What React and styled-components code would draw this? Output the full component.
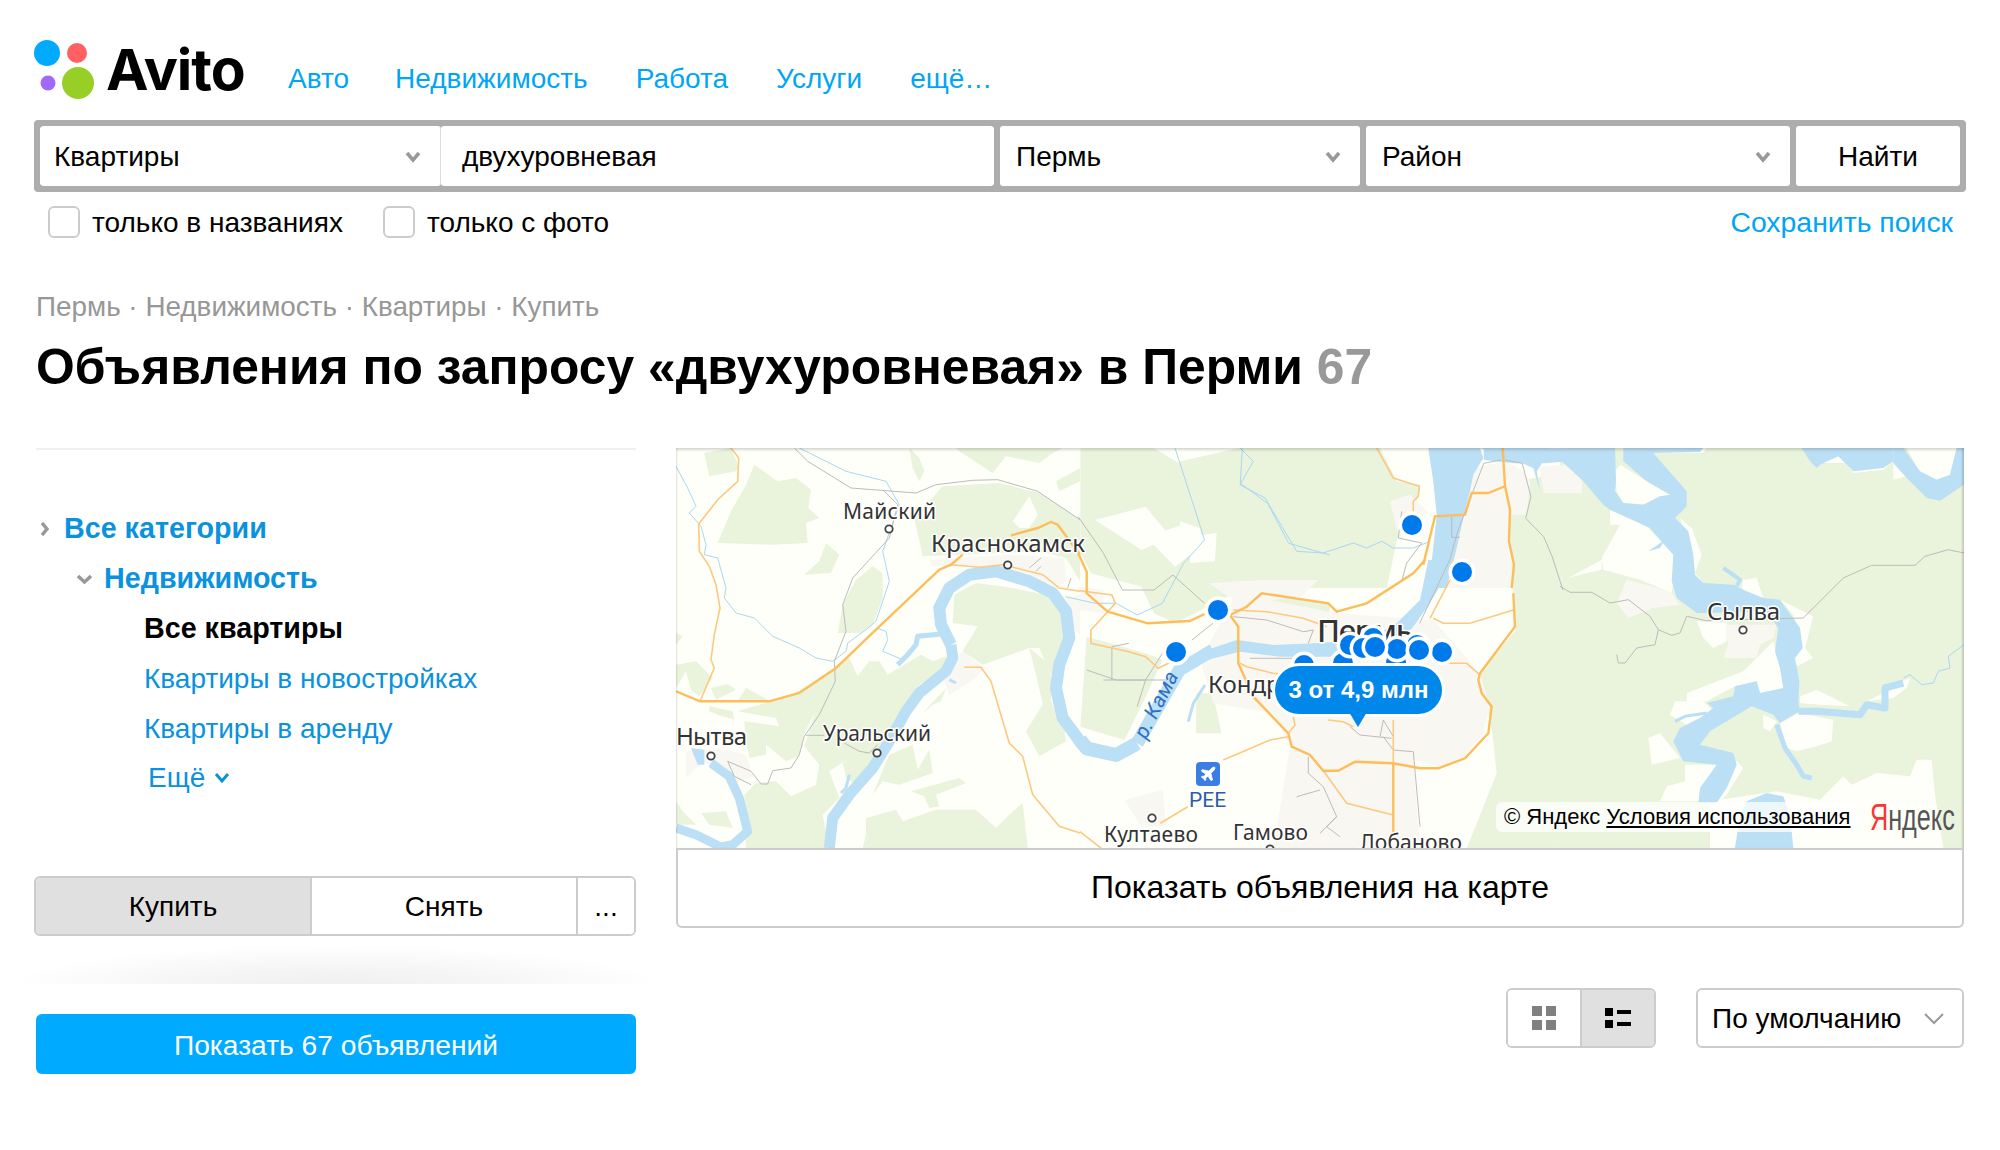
import React from "react";
import styled, { createGlobalStyle } from "styled-components";
import { Plane } from "lucide-react";

const GlobalStyle = createGlobalStyle`
  * { box-sizing: border-box; }
  body {
    margin: 0;
    background: #fff;
    color: #000;
    font-family: "Liberation Sans", Arial, sans-serif;
    font-size: 28px;
  }
`;

// map geometry is traced in the coordinates of reference crops
const frame = (ox, oy, sx, sy) => (...n) => {
  const out = [];
  for (let i = 0; i < n.length; i += 2) {
    out.push(`${(ox + n[i] / sx).toFixed(1)},${(oy + n[i + 1] / sy).toFixed(1)}`);
  }
  return out.join(" ");
};
const L = frame(670, 440, 2.376, 3);
const R = frame(1330, 440, 2.34, 3);
const C = frame(1180, 560, 3, 3);
const T = frame(1180, 448, 3, 3);
const W = frame(676, 448, 3, 3);
const E = frame(1560, 448, 3, 3);

const forest = [
  // west
  W(85,15, 165,0, 190,60, 180,70, 100,85),
  W(210,110, 235,50, 305,100, 360,90, 405,125, 397,180, 430,210, 390,225, 395,285, 290,290, 125,285, 165,190),
  W(450,285, 490,320, 465,375, 385,380, 430,340),
  W(700,0, 730,30, 745,70, 730,100, 710,60),
  W(850,10, 950,75, 990,25, 1090,45, 1130,15, 1160,0, 840,0),
  W(715,210, 800,115, 970,105, 1090,135, 1212,215, 1212,400, 1170,330, 1090,310, 740,325),
  W(1140,100, 1212,60, 1212,100, 1150,130),
  W(500,470, 540,395, 590,355, 620,375, 620,450, 590,530, 555,555, 485,555),
  W(835,440, 900,405, 1010,420, 1110,440, 1165,490, 1185,560, 1125,680, 1090,600, 1060,600, 920,650, 860,610, 905,535, 830,525),
  W(1060,600, 1110,640, 1130,700, 1125,760, 1165,840, 1170,880, 1090,925, 1050,850, 1100,770, 1085,700),
  W(480,650, 520,630, 545,685, 580,640, 610,640, 635,680, 735,620, 770,640, 810,625, 825,650, 730,710, 680,790, 610,930, 540,1010, 510,990, 500,945, 520,930, 460,970, 490,1050, 440,1100, 460,1200, 210,1200, 205,1040, 240,1005, 300,1000, 345,1045, 420,1010, 430,950, 385,895, 440,720),
  W(0,555, 20,565, 0,590),
  W(0,650, 60,640, 110,690, 70,745, 45,725, 30,670, 0,720),
  W(105,720, 155,708, 180,725, 120,755),
  W(185,760, 210,720, 275,755),
  W(100,775, 170,790, 175,815, 125,800, 100,790),
  W(185,790, 350,740, 470,665, 430,770, 385,855, 370,925, 330,940, 270,890, 270,920, 220,930, 210,880, 205,820, 310,835, 300,810),
  W(0,1060, 20,1090, 60,1130, 0,1130),
  W(75,1095, 150,1090, 170,1140, 100,1130),
  W(640,920, 710,890, 725,965, 760,905, 770,975, 670,1010, 620,1000, 590,1040),
  W(705,1030, 850,990, 870,1005, 780,1040, 790,1075, 760,1080, 745,1045),
  W(570,1110, 660,1085, 680,1120, 780,1085, 900,1085, 960,1140, 1000,1100, 1040,1065, 1055,1200, 560,1200, 570,1160),
  W(735,800, 810,720, 795,760, 770,770),
  // middle
  L(975,25, 1150,25, 1250,100, 1568,100, 1568,400, 1450,420, 1340,460, 1200,550, 1150,520, 1120,440, 1000,400, 975,340),
  L(990,590, 1130,640, 1170,660, 1130,770, 1080,900, 975,860),
  L(1250,760, 1290,760, 1310,880, 1250,880),
  L(1380,490, 1450,470, 1568,490, 1568,540, 1420,520),
  T(0,40, 180,0, 600,0, 650,100, 720,110, 710,160, 630,180, 680,190, 650,280, 620,420, 0,420),
  R(415,130, 538,100, 538,1225, 320,1225, 390,1000, 380,880, 350,700, 435,570, 420,350),
  // east
  E(0,0, 1212,0, 1212,1200, 0,1200),
];

const clearings = [
  T(0,220, 60,240, 70,300, 0,290),
  T(30,265, 110,255, 105,340, 30,345),
  L(1010,240, 1130,200, 1190,290, 1120,330),
  L(1130,290, 1230,250, 1260,320, 1200,380),
  W(1010,220, 1060,145, 1085,200, 1060,240, 1030,240),
  E(180,50, 260,100, 330,140, 300,150, 270,170, 190,165, 170,130, 165,70),
  E(280,0, 440,0, 430,15, 290,15),
  E(150,185, 260,235, 340,320, 340,400, 335,435, 240,395, 130,365, 125,330, 180,230, 150,230),
  E(360,210, 395,240, 425,320, 405,375, 430,405, 400,400, 385,290),
  E(550,395, 590,390, 610,450, 545,425),
  E(660,455, 760,505, 735,600, 760,630, 710,655, 700,620, 725,595, 700,500),
  E(410,520, 500,525, 500,580, 460,600, 430,570),
  E(380,735, 550,670, 570,650, 640,580, 660,660, 670,720, 600,735, 590,700, 525,715, 440,760, 380,760),
  E(345,760, 430,760, 460,790, 380,830, 330,800),
  E(660,825, 715,795, 820,815, 815,880, 770,895, 710,910, 680,900),
  E(720,745, 770,725, 870,775, 780,770, 720,765),
  E(920,760, 960,740, 985,720, 1030,700, 1050,690, 1040,720, 1000,750),
  E(265,870, 300,855, 360,930, 275,950),
  E(470,950, 530,940, 550,960, 500,1040, 470,1070, 415,1060, 300,1060, 320,1015, 375,1000, 375,950),
  E(450,1060, 580,1040, 650,1030, 780,1055, 850,985, 875,1010, 950,975, 1050,985, 1070,935, 1115,935, 1125,1040, 1150,1200, 450,1200),
  E(790,40, 840,25, 880,75, 970,65, 1000,40, 1000,95, 1040,85, 1000,45, 760,45),
  E(1040,0, 1190,0, 1170,80, 1130,95, 1080,75),
  E(610,800, 650,820, 630,850, 610,840),
  E(25,390, 125,335, 125,365, 60,380),
];

const urban = [
  C(170,100, 470,160, 760,180, 900,340, 930,440, 910,520, 850,590, 780,620, 700,600, 720,870, 280,870, 330,560, 280,460, 100,430, 60,300),
  T(880,60, 975,40, 1030,70, 1050,100, 1040,200, 990,200, 1000,420, 750,420, 800,300, 870,130),
  W(760,335, 1010,320, 1165,330, 1170,400, 1140,420, 1000,375, 860,355, 770,355),
  W(830,640, 860,610, 925,660, 900,690, 820,740, 805,700),
  W(1170,450, 1212,440, 1212,560, 1190,540),
  W(30,910, 90,905, 150,905, 210,920, 230,985, 170,1010, 150,970, 90,945, 60,960, 30,990),
  L(974,440, 1030,450, 1030,520, 974,510),
  L(1280,430, 1400,420, 1540,420, 1500,470, 1350,490),
  L(1080,1080, 1170,1050, 1180,1160, 1120,1160),
  R(490,80, 590,70, 590,160, 500,160),
  T(630,160, 690,140, 740,190, 660,280),
  E(200,395, 330,430, 360,470, 280,480, 205,510, 170,465),
  E(495,530, 650,530, 640,570, 600,590, 590,630, 490,630, 505,590),
];

const waterAreas = [
  C(0,330, 80,270, 170,240, 280,255, 400,250, 560,240, 650,190, 720,120, 745,0, 810,0, 790,60, 750,130, 700,200, 640,260, 500,290, 400,290, 300,290, 180,275, 80,300, 0,350),
  T(745,420, 760,300, 770,200, 760,100, 745,0, 900,0, 910,30, 880,80, 870,130, 850,210, 830,300, 800,420),
  T(900,0, 1110,0, 1090,40, 1070,70, 1080,130, 1060,60, 970,20),
  R(360,25, 600,25, 600,60, 500,70, 430,70, 360,60),
  E(0,35, 30,0, 165,0, 168,100, 165,130, 190,165, 250,170, 300,145, 330,140, 260,100, 190,40, 190,0, 430,0, 420,12, 280,15, 380,130, 380,175, 345,210, 385,250, 400,320, 405,380, 430,405, 520,410, 560,430, 610,450, 660,455, 720,540, 728,600, 705,630, 718,700, 715,760, 720,790, 710,795, 660,825, 640,800, 575,775, 450,850, 420,890, 520,915, 530,950, 500,1020, 470,1065, 415,1065, 420,1020, 470,950, 370,940, 340,880, 360,840, 420,810, 460,780, 440,765, 520,745, 525,715, 590,700, 600,735, 670,720, 660,660, 645,610, 655,540, 620,490, 440,495, 410,495, 350,450, 335,400, 340,320, 270,240, 150,185, 130,170, 70,100),
  E(265,310, 315,275, 300,300),
  E(725,0, 1000,0, 1000,40, 970,60, 880,70, 835,25, 780,50, 770,60, 750,40),
  E(1030,0, 1080,70, 1130,95, 1170,80, 1190,0, 1212,0, 1212,110, 1140,158, 1100,150, 1040,90, 1000,45, 1000,0),
  E(525,1200, 540,1100, 560,1060, 620,1035, 670,1045, 690,1100, 700,1200),
  W(45,900, 85,905, 85,950, 65,950),
];

const waterLines = [
  { w: 11, d: W(460,1200, 470,1110, 520,1040, 590,960, 640,880, 690,790, 730,735, 810,670, 830,630, 825,590) },
  { w: 12, d: W(825,590, 795,530, 790,480, 820,420, 880,380, 960,370, 1060,400, 1130,435, 1170,490, 1180,570, 1150,650, 1140,720, 1160,810, 1212,880) },
  { w: 14, d: L(974,900, 990,925, 1060,945, 1110,910) },
  { w: 13, d: L(1110,910, 1160,800, 1210,690, 1290,630) },
  { w: 5, d: W(795,558, 725,565, 720,590, 695,620, 665,650) },
  { w: 9, d: W(105,945, 160,985, 190,1050, 205,1110, 215,1150, 170,1190, 120,1200) },
  { w: 9, d: W(0,1140, 60,1160, 130,1195) },
  { w: 3, d: W(520,980, 510,1020, 495,1035) },
  { w: 3, d: W(820,695, 840,705) },
  { w: 7, d: E(715,790, 770,790, 900,800, 920,770, 975,780, 975,720, 1030,705) },
  { w: 4, d: E(490,360, 540,395, 530,415) },
  { w: 5, d: E(650,830, 675,900, 710,950, 730,985, 755,990) },
  { w: 3, d: E(345,820, 375,805, 440,795) },
  { w: 3, d: C(75,375, 40,430, 25,485) },
];

const streams = [
  W(0,55, 35,120, 60,175, 40,195, 75,235, 90,290, 85,320, 125,330, 150,420, 145,450, 180,495, 235,510, 290,565, 370,600, 420,630, 470,640, 510,610, 515,585, 570,545, 600,520, 640,400, 620,310, 670,170, 630,100, 510,70, 400,15, 370,0),
  W(600,540, 630,550, 635,575, 620,610, 680,635),
  L(940,470, 1010,490, 1060,490, 1110,525, 1170,490, 1220,370, 1270,300, 1250,220, 1200,25),
  L(1360,25, 1355,130, 1420,190, 1470,310, 1568,345),
  T(180,0, 220,40, 180,110, 255,150, 305,235, 350,310, 430,315, 520,285, 560,300, 605,280, 640,300, 700,300, 750,280),
  E(1212,590, 1165,625, 1170,660, 1135,670, 1120,705, 1085,710, 1050,680, 1030,690),
];

const minorRoads = [
  W(355,0, 395,40, 525,120, 720,135, 780,110, 890,97, 965,95, 1085,130, 1212,215),
  W(625,130, 665,170, 640,270, 530,390, 500,470, 510,550, 475,640, 478,700, 430,800, 385,865, 370,920, 345,960, 290,968, 275,1008, 255,1008, 225,970, 155,940, 175,985, 225,1010),
  W(390,862, 445,862),
  W(505,885, 550,910, 580,915, 605,890),
  W(1060,360, 1095,330),
  W(1080,370, 1095,355),
  W(1175,420, 1185,390),
  L(970,230, 1030,340, 1075,450, 1150,450, 1195,405, 1270,490),
  L(1050,720, 1050,620, 1090,610),
  L(990,690, 1060,720, 1130,720, 1170,640),
  L(1030,720, 1180,720),
  L(1130,720, 1110,800),
  L(1240,600, 1290,550),
  R(400,60, 360,70, 300,270, 280,360, 210,550),
  R(410,60, 450,70, 470,170, 458,235, 500,290, 520,350, 545,450),
  E(0,415, 30,433, 95,433, 150,465, 205,455, 270,505, 295,545, 335,562, 360,555, 380,505, 440,518, 730,510, 850,390, 935,352, 1065,352, 1095,325, 1165,305, 1212,315),
  E(295,545, 285,590, 230,600, 195,645, 175,645, 170,620),
  T(665,190, 655,270, 725,285, 680,345, 665,400),
  T(815,200, 815,268, 840,268),
  C(385,590, 385,640, 430,680, 470,770, 420,820),
  C(610,530, 640,570, 700,575, 720,800),
  C(350,710, 420,690),
  C(470,770, 440,800, 480,830),
  C(160,170, 260,180, 370,215, 400,210, 385,250),
  C(210,295, 400,295),
  C(600,530, 610,480, 640,530),
  C(510,500, 540,525, 635,535),
];

const mainRoads = [
  W(0,730, 72,760, 280,760, 370,735, 480,660, 600,545, 790,365, 825,350, 860,320),
  W(1005,262, 1085,240, 1125,222, 1145,230, 1212,320),
  L(970,340, 990,395, 990,460, 1040,515, 1135,550, 1235,543, 1270,522),
  C(150,165, 200,140, 245,100, 445,130, 470,155, 560,130, 700,40, 735,0),
  T(730,350, 765,205, 855,200, 875,135, 925,135, 975,115, 968,0),
  T(975,115, 990,185, 987,280, 1002,350, 995,420),
  C(1000,100, 1005,200, 900,340, 895,360, 905,400, 935,440, 925,520, 855,595, 775,625, 720,625, 640,610, 525,605, 475,632, 430,632, 390,585, 335,560, 325,520, 220,410, 175,310, 175,200, 150,165),
  C(640,610, 640,820),
];

const sideRoads = [
  W(165,0, 188,30, 185,100, 125,155, 68,228, 70,310, 100,355, 120,410, 132,480, 115,560, 105,635, 115,660, 72,760),
  W(865,658, 915,658, 945,700, 1000,885, 1040,925, 1070,1040, 1150,1135, 1212,1155),
  L(974,1175, 1025,1225),
  W(825,350, 910,358, 980,350, 1100,380, 1150,420, 1212,430),
  L(974,452, 1050,465, 1058,490, 1040,515),
  L(1040,515, 1000,570, 1000,610, 1090,635, 1130,650, 1160,685, 1200,660),
  C(325,530, 270,540, 130,600),
  L(1165,1150, 1230,1100),
  C(430,632, 500,730, 640,765),
  C(760,175, 790,190, 870,190, 1000,150),
  C(750,175, 810,60),
  C(180,310, 200,320, 280,340, 340,345),
  C(160,150, 260,155, 370,175, 440,200),
  C(800,310, 860,310, 900,345),
  C(340,470, 345,495, 325,520),
  C(445,480, 490,485, 520,500),
  C(640,480, 640,620),
  T(590,0, 640,90, 718,115, 715,145, 700,160, 700,190),
];

const places = [
  { name: "Майский", x: 843, y: 519, size: 21, len: 93 },
  { name: "Краснокамск", x: 931, y: 552, size: 24, len: 154 },
  { name: "Кондратово", x: 1208, y: 693, size: 24 },
  { name: "Нытва", x: 676, y: 745, size: 24, len: 71 },
  { name: "Уральский", x: 823, y: 741, size: 21, len: 108 },
  { name: "Култаево", x: 1104, y: 842, size: 21, len: 94 },
  { name: "Гамово", x: 1233, y: 840, size: 21, len: 75 },
  { name: "Лобаново", x: 1360, y: 850, size: 21, len: 102 },
  { name: "Сылва", x: 1707, y: 620, size: 24, len: 73 },
];

const dots = [[889,529],[1007.7,565],[711,756],[877,753],[1152,818],[1743,630],[1270,849]];

const pins = [
  [1218,610],[1176,652],[1412,525],[1462,572],[1304,665],[1343,663],[1396,662],[1373,638],
  [1417,645],[1350,645],[1363,648],[1397,649],[1442,652],[1419,650],[1375,647],
];

const Page = styled.div`
  width: 1932px;
  margin-left: 34px;
`;

const Header = styled.header`
  height: 120px;
  display: flex;
  align-items: flex-start;
`;

const Logo = styled.div`
  display: flex;
  align-items: flex-start;
  margin-top: 40px;
  width: 254px;
`;

const LogoName = styled.span`
  font-family: Inter, "Liberation Sans", sans-serif;
  font-weight: 700;
  font-size: 57px;
  line-height: 60px;
  letter-spacing: -1px;
  margin: 0 0 0 12px;
`;

const Nav = styled.nav`
  display: flex;
  gap: 48px;
  margin-top: 60px;
`;

const NavLink = styled.a`
  color: #00a6f5;
  font-size: 28px;
  line-height: 38px;
  &:first-child {
    margin-right: -2px;
  }
`;

const SearchBar = styled.div`
  display: flex;
  gap: 6px;
  height: 72px;
  padding: 6px;
  background: #adadad;
  border-radius: 4px;
`;

const Field = styled.div`
  display: flex;
  align-items: center;
  justify-content: space-between;
  width: ${(p) => p.$width}px;
  background: #fff;
  border-radius: 3px;
  padding: 2px ${(p) => p.$right ?? 19}px 0 ${(p) => p.$left ?? 16}px;
  border-right: ${(p) => (p.$divided ? "1px solid #ddd" : "none")};
`;

const FieldGroup = styled.div`
  display: flex;
  border-radius: 3px;
  overflow: hidden;
`;

const FindButton = styled.div`
  flex: 1;
  display: flex;
  align-items: center;
  justify-content: center;
  padding-top: 2px;
  background: #fff;
  border-radius: 3px;
`;

const Options = styled.div`
  display: flex;
  align-items: center;
  height: 62px;
  padding: 0 13px 0 14px;
`;

const CheckLabel = styled.label`
  display: flex;
  align-items: center;
  gap: 12px;
  margin-right: 40px;
`;

const CheckBox = styled.span`
  width: 32px;
  height: 32px;
  margin-top: -2px;
  border: 2px solid #ccc;
  border-radius: 6px;
  background: #fff;
`;

const SaveLink = styled.a`
  margin: -2px 0 0 auto;
  color: #00a6f5;
  font-size: 28.4px;
`;

const Breadcrumbs = styled.div`
  margin: 33px 0 0 2px;
  color: #979797;
  font-size: 27.85px;
  line-height: 40px;
`;

const Title = styled.h1`
  margin: 10px 0 0 2px;
  font-size: 49.8px;
  line-height: 60px;
  font-weight: 700;
`;

const TitleCount = styled.span`
  color: #999;
`;

const Columns = styled.div`
  display: flex;
  margin-top: 51px;
  padding-left: 2px;
`;

const Sidebar = styled.aside`
  width: 600px;
  flex: none;
`;

const SideDivider = styled.div`
  height: 2px;
  background: #f0f0f0;
`;

const Tree = styled.ul`
  list-style: none;
  margin: 54px 0 0;
  padding: 0;
`;

const TreeItem = styled.li`
  position: relative;
  height: 50px;
  line-height: 49px;
  padding-left: ${(p) => p.$indent}px;
  color: ${(p) => (p.$current ? "#000" : "#0a92dc")};
  font-weight: ${(p) => (p.$strong ? 700 : 400)};
  font-size: ${(p) => (p.$strong ? 28.7 : 28)}px;
  white-space: nowrap;
`;

const TreeArrow = styled.svg`
  position: absolute;
  left: ${(p) => p.$left}px;
  top: ${(p) => p.$top}px;
`;

const MoreRow = styled.div`
  display: flex;
  align-items: center;
  gap: 9px;
  margin: -1px 0 0 112px;
  height: 50px;
  color: #0a92dc;
`;

const Segments = styled.div`
  display: flex;
  width: 602px;
  height: 60px;
  margin: 73px 0 0 -2px;
  border: 2px solid #ccc;
  border-radius: 6px;
  overflow: hidden;
`;

const Segment = styled.div`
  width: ${(p) => p.$width}px;
  flex: ${(p) => (p.$grow ? 1 : "none")};
  display: flex;
  align-items: center;
  justify-content: center;
  padding-top: 2px;
  background: ${(p) => (p.$active ? "#e0e0e0" : "#fff")};
  border-right: ${(p) => (p.$grow ? "none" : "2px solid #ccc")};
`;

const Fade = styled.div`
  height: 38px;
  margin: 10px -24px 0;
  background: radial-gradient(ellipse 50% 100% at 50% 100%, #efefef 0%, #f7f7f7 55%, #fff 100%);
`;

const ShowButton = styled.div`
  display: flex;
  align-items: center;
  justify-content: center;
  height: 60px;
  margin-top: 30px;
  padding-top: 2px;
  background: #00aaff;
  color: #fff;
  font-size: 28.2px;
  border-radius: 6px;
`;

const Content = styled.main`
  width: 1288px;
  margin-left: 40px;
`;

const MapBox = styled.div`
  position: relative;
  height: 400px;
  overflow: hidden;
  background: #feFff8;
  &::after {
    content: "";
    position: absolute;
    inset: 0;
    pointer-events: none;
    box-shadow: inset 0 3px 3px -1px rgba(0, 0, 0, 0.16), inset 2px 0 2px -1px rgba(0, 0, 0, 0.1),
      inset -3px 0 2px -1px rgba(0, 0, 0, 0.14);
  }
`;

const MapCanvas = styled.svg`
  display: block;
  width: 1288px;
  height: 400px;
`;

const PlaceName = styled.text`
  font-family: "Noto Sans", Roboto, sans-serif;
  fill: #333;
  stroke: #fff;
  stroke-width: 3px;
  paint-order: stroke;
  stroke-linejoin: round;
`;

const PricePill = styled.div`
  position: absolute;
  left: 599px;
  top: 218px;
  width: 167px;
  height: 48px;
  display: flex;
  align-items: center;
  justify-content: center;
  background: #0087ea;
  color: #fff;
  font-size: 24px;
  font-weight: 700;
  border-radius: 24px;
  box-shadow: 0 0 0 3px #fff;
  white-space: nowrap;
  &::after {
    content: "";
    position: absolute;
    left: 74px;
    top: 46px;
    border-style: solid;
    border-width: 15px 9px 0;
    border-color: #0087ea transparent transparent;
  }
`;

const Copyright = styled.div`
  position: absolute;
  left: 820px;
  top: 354px;
  width: 362px;
  height: 30px;
  padding-left: 8px;
  display: flex;
  align-items: center;
  gap: 6px;
  background: rgba(255, 255, 255, 0.75);
  border-radius: 6px;
  font-size: 22px;
  white-space: nowrap;
`;

const TermsLink = styled.a`
  color: #000;
  text-decoration: underline;
`;

const YandexMark = styled.div`
  position: absolute;
  left: 1194px;
  top: 350px;
  font-size: 36px;
  line-height: 40px;
  color: #555;
  transform: scaleX(0.7);
  transform-origin: left center;
  white-space: nowrap;
`;

const YandexFirst = styled.span`
  color: #f33;
`;

const MapButton = styled.div`
  height: 80px;
  display: flex;
  align-items: center;
  justify-content: center;
  padding-bottom: 2px;
  border: 2px solid #ccc;
  border-radius: 0 0 6px 6px;
  font-size: 32px;
`;

const SortRow = styled.div`
  display: flex;
  justify-content: flex-end;
  gap: 40px;
  margin-top: 60px;
`;

const ViewToggle = styled.div`
  display: flex;
  width: 150px;
  height: 60px;
  border: 2px solid #ccc;
  border-radius: 6px;
  overflow: hidden;
`;

const ViewButton = styled.div`
  flex: 1;
  display: flex;
  align-items: center;
  justify-content: center;
  background: ${(p) => (p.$active ? "#e0e0e0" : "#fff")};
  & + & {
    border-left: 2px solid #ccc;
  }
`;

const SortSelect = styled.div`
  width: 268px;
  height: 60px;
  display: flex;
  align-items: center;
  justify-content: space-between;
  padding: 1px 18px 0 14px;
  border: 2px solid #ccc;
  border-radius: 6px;
`;

const Chevron = ({ color = "#999", width = 3.5 }) => (
  <svg width="16" height="12" viewBox="0 0 16 12">
    <polyline points="2,2 8,9 14,2" fill="none" stroke={color} strokeWidth={width} />
  </svg>
);

const MapView = () => (
  <MapCanvas viewBox="676 448 1288 400">
    <g fill="#eaf3dc">
      {forest.map((p, i) => <polygon key={i} points={p} />)}
    </g>
    <g fill="#feFff8">
      {clearings.map((p, i) => <polygon key={i} points={p} />)}
    </g>
    <g fill="#f9f7f2">
      {urban.map((p, i) => <polygon key={i} points={p} />)}
    </g>
    <g fill="none" stroke="#a9d7f3" strokeWidth="1">
      {streams.map((p, i) => <polyline key={i} points={p} />)}
    </g>
    <g fill="#bbdff4">
      {waterAreas.map((p, i) => <polygon key={i} points={p} />)}
    </g>
    <g fill="none" stroke="#bbdff4" strokeLinejoin="round">
      {waterLines.map((l, i) => <polyline key={i} points={l.d} strokeWidth={l.w} />)}
    </g>
    <g fill="none" stroke="#bcbcbc" strokeWidth="1">
      {minorRoads.map((p, i) => <polyline key={i} points={p} />)}
    </g>
    <g fill="none" stroke="#fdc880" strokeWidth="1.6">
      {sideRoads.map((p, i) => <polyline key={i} points={p} />)}
    </g>
    <g fill="none" stroke="#fdbd5a" strokeWidth="2.4">
      {mainRoads.map((p, i) => <polyline key={i} points={p} />)}
    </g>

    {places.map((p) => (
      <PlaceName key={p.name} x={p.x} y={p.y} fontSize={p.size} textLength={p.len}>{p.name}</PlaceName>
    ))}
    {dots.map(([x, y]) => (
      <circle key={x} cx={x} cy={y} r="3.7" fill="#fff" stroke="#444" strokeWidth="1.8" />
    ))}
    <text x="0" y="0" transform="translate(1146 740) rotate(-63)" fontSize="21" fontStyle="italic"
      fontFamily="Roboto, sans-serif" fill="#2f6fc4">р. Кама</text>

    <rect x="1196" y="762" width="24" height="24" rx="4" fill="#3b7de2" />
    <Plane x="1199" y="765" size={18} color="#fff" fill="#fff" strokeWidth={1} />
    <text x="1189" y="807" fontSize="21" fontFamily="Roboto, sans-serif" fill="#2c5ea8">PEE</text>

    <PlaceName x="1317" y="642" fontSize="31" fontWeight="500" textLength="96">Пермь</PlaceName>

    {pins.map(([x, y], i) => (
      <g key={i}>
        <circle cx={x} cy={y} r="13.5" fill="#fff" />
        <circle cx={x} cy={y} r="10" fill="#0079ea" />
      </g>
    ))}
  </MapCanvas>
);

export default function App() {
  return (
    <Page>
      <GlobalStyle />
      <Header>
        <Logo>
          <svg width="60" height="60" viewBox="0 0 60 60">
            <circle cx="13" cy="13" r="13" fill="#00aaff" />
            <circle cx="43" cy="13" r="10" fill="#ff6163" />
            <circle cx="14" cy="43" r="7.5" fill="#a169f7" />
            <circle cx="44" cy="43" r="16" fill="#97cf26" />
          </svg>
          <LogoName>Avito</LogoName>
        </Logo>
        <Nav>
          <NavLink>Авто</NavLink>
          <NavLink>Недвижимость</NavLink>
          <NavLink>Работа</NavLink>
          <NavLink>Услуги</NavLink>
          <NavLink>ещё…</NavLink>
        </Nav>
      </Header>

      <SearchBar>
        <FieldGroup>
          <Field $width={401} $left={14} $divided>
            <span>Квартиры</span>
            <Chevron />
          </Field>
          <Field $width={553} $left={21}>двухуровневая</Field>
        </FieldGroup>
        <Field $width={360}>
          <span>Пермь</span>
          <Chevron />
        </Field>
        <Field $width={424}>
          <span>Район</span>
          <Chevron />
        </Field>
        <FindButton>Найти</FindButton>
      </SearchBar>

      <Options>
        <CheckLabel><CheckBox />только в названиях</CheckLabel>
        <CheckLabel><CheckBox />только с фото</CheckLabel>
        <SaveLink>Сохранить поиск</SaveLink>
      </Options>

      <Breadcrumbs>Пермь · Недвижимость · Квартиры · Купить</Breadcrumbs>
      <Title>Объявления по запросу «двухуровневая» в Перми <TitleCount>67</TitleCount></Title>

      <Columns>
        <Sidebar>
          <SideDivider />
          <Tree>
            <TreeItem $indent={28} $strong>
              <TreeArrow $left={4} $top={18} width="9" height="14" viewBox="0 0 9 14">
                <polyline points="2,1 7,7 2,13" fill="none" stroke="#999" strokeWidth="3.5" />
              </TreeArrow>
              Все категории
            </TreeItem>
            <TreeItem $indent={68} $strong>
              <TreeArrow $left={41} $top={20} width="15" height="10" viewBox="0 0 15 10">
                <polyline points="1,2 7.5,8 14,2" fill="none" stroke="#999" strokeWidth="3.5" />
              </TreeArrow>
              Недвижимость
            </TreeItem>
            <TreeItem $indent={108} $strong $current>Все квартиры</TreeItem>
            <TreeItem $indent={108}>Квартиры в новостройках</TreeItem>
            <TreeItem $indent={108}>Квартиры в аренду</TreeItem>
          </Tree>
          <MoreRow>
            Ещё
            <Chevron color="#0a92dc" width={3} />
          </MoreRow>

          <Segments>
            <Segment $width={276} $active>Купить</Segment>
            <Segment $width={266}>Снять</Segment>
            <Segment $grow>...</Segment>
          </Segments>
          <Fade />
          <ShowButton>Показать 67 объявлений</ShowButton>
        </Sidebar>

        <Content>
          <MapBox>
            <MapView />
            <PricePill>3 от 4,9 млн</PricePill>
            <Copyright>
              <span>© Яндекс</span>
              <TermsLink>Условия использования</TermsLink>
            </Copyright>
            <YandexMark><YandexFirst>Я</YandexFirst>ндекс</YandexMark>
          </MapBox>
          <MapButton>Показать объявления на карте</MapButton>

          <SortRow>
            <ViewToggle>
              <ViewButton>
                <svg width="24" height="24" viewBox="0 0 24 24" fill="#808080">
                  <rect width="10" height="10" />
                  <rect x="14" width="10" height="10" />
                  <rect y="14" width="10" height="10" />
                  <rect x="14" y="14" width="10" height="10" />
                </svg>
              </ViewButton>
              <ViewButton $active>
                <svg width="26" height="20" viewBox="0 0 26 20" fill="#000">
                  <rect width="8" height="8" />
                  <rect y="12" width="8" height="8" />
                  <rect x="12" y="2" width="14" height="4" />
                  <rect x="12" y="14" width="14" height="4" />
                </svg>
              </ViewButton>
            </ViewToggle>
            <SortSelect>
              <span>По умолчанию</span>
              <svg width="20" height="12" viewBox="0 0 20 12">
                <polyline points="1,1 10,10 19,1" fill="none" stroke="#999" strokeWidth="2" />
              </svg>
            </SortSelect>
          </SortRow>
        </Content>
      </Columns>
    </Page>
  );
}
